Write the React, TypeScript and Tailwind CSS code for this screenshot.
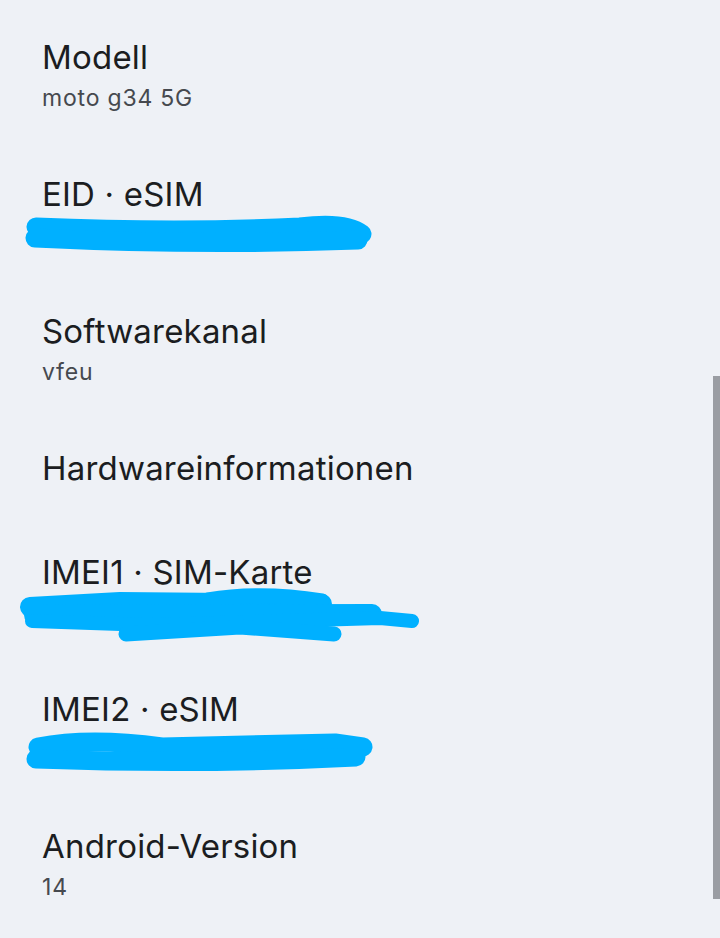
import React from "react";

type Item = {
	title: string;
	value?: string;
	scribble?: "eid" | "imei1" | "imei2";
};

const items: Item[] = [
	{ title: "Modell", value: "moto g34 5G" },
	{ title: "EID · eSIM", scribble: "eid" },
	{ title: "Softwarekanal", value: "vfeu" },
	{ title: "Hardwareinformationen" },
	{ title: "IMEI1 · SIM-Karte", scribble: "imei1" },
	{ title: "IMEI2 · eSIM", scribble: "imei2" },
	{ title: "Android-Version", value: "14" },
];

// hand drawn redaction marks, coords are local to the row
function Scribble({ kind }: { kind: "eid" | "imei1" | "imei2" }) {
	const blue = "#00b0ff";
	return (
		<svg
			className="absolute left-0 top-0 pointer-events-none overflow-visible"
			width="720"
			height="137"
			viewBox="0 0 720 137"
			fill="none"
			stroke={blue}
			strokeLinecap="round"
			strokeLinejoin="round"
		>
			{kind === "eid" && (
				<>
					<path d="M36 82 Q180 88 300 82 Q345 76 362 89" strokeWidth="19" />
					<path d="M35 93 Q200 101 358 95" strokeWidth="19" />
				</>
			)}
			{kind === "imei1" && (
				<>
					<path d="M30 84 L120 79 L322 81" strokeWidth="20" />
					<path d="M208 77 Q260 68 322 78" strokeWidth="15" />
					<path d="M34 92 L372 91" strokeWidth="20" />
					<path d="M32 98 L150 102 L380 95 L412 98" strokeWidth="14" />
					<path d="M126 111 L240 104 L334 111" strokeWidth="15" />
				</>
			)}
			{kind === "imei2" && (
				<>
					<path d="M38 87 Q90 77 162 87 L335 83 L363 87" strokeWidth="19" />
					<path d="M36 99 Q200 105 356 97" strokeWidth="19" />
				</>
			)}
		</svg>
	);
}

export default function App() {
	return (
		<div
			className="relative w-[720px] h-[938px] overflow-hidden bg-[#eef1f6] pt-[8px]"
			style={{ fontFamily: "Inter, 'Noto Sans', sans-serif" }}
		>
			{items.map((it) => (
				<div
					key={it.title}
					className={`relative px-[42px] pt-[28px] ${
						it.value || it.scribble ? "pb-[29px]" : "pb-[32px]"
					}`}
				>
					<div className="h-[44px] flex items-center text-[33px] text-[#1b1d21] tracking-[0.2px]">
						{it.title}
					</div>
					{(it.value || it.scribble) && (
						<div className="h-[36px] flex items-center text-[23px] tracking-[0.8px] text-[#46494f]">
							{it.value}
						</div>
					)}
					{it.scribble && <Scribble kind={it.scribble} />}
				</div>
			))}
			<div className="absolute right-0 top-[376px] w-[7px] h-[523px] bg-[#9a9da3]" />
		</div>
	);
}
